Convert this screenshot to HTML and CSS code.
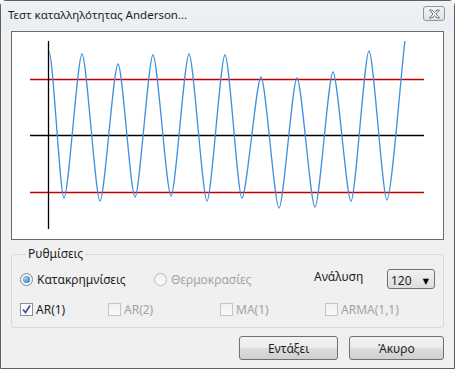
FILE: index.html
```html
<!DOCTYPE html>
<html lang="el">
<head>
    <meta charset="UTF-8">
    <title>Τεστ καταλληλότητας Anderson...</title>
    <link rel="stylesheet" href="styles.css">
</head>
<body>
    <div class="window">
        <div class="titlebar">
            <span class="title">Τεστ καταλληλότητας Anderson...</span>
            <button class="close" type="button" aria-label="Κλείσιμο">
                <svg width="13" height="10" viewBox="0 0 13 10">
                    <path d="M1.5,1 L4,1 L6.5,3.3 L9,1 L11.5,1 L8,5 L11.5,9 L9,9 L6.5,6.7 L4,9 L1.5,9 L5,5 Z" fill="#f4f6f8" stroke="#6d7580" stroke-width="1"/>
                </svg>
            </button>
        </div>

        <div class="content">
            <!-- chart panel -->
            <div class="chart">
                <svg width="431" height="207" viewBox="12 32 431 207">
                    <line x1="30" y1="79.5" x2="424" y2="79.5" stroke="#c00000" stroke-width="1.3"/>
                    <line x1="30" y1="192.5" x2="424" y2="192.5" stroke="#c00000" stroke-width="1.3"/>
                    <line x1="30" y1="135.5" x2="424" y2="135.5" stroke="#000" stroke-width="1.3"/>
                    <line x1="48.5" y1="41" x2="48.5" y2="229" stroke="#000" stroke-width="1.3"/>
                    <path fill="none" stroke="#3f8fdc" stroke-width="1.3"
                        d="M49,52 C53,52 60,198 64,198
                           C68.5,198 77.5,54 82,54
                           C86.5,54 95.5,201 100,201
                           C104.5,201 113.5,64 118,64
                           C122.5,64 130.5,197 135,197
                           C139.5,197 148.5,55 153,55
                           C157.5,55 166.5,196 171,196
                           C175.5,196 184.5,54 189,54
                           C193.5,54 202.5,201 207,201
                           C211.5,201 220.5,55 225,55
                           C229.5,55 237.5,198 242,198
                           C246.5,198 256.5,77 261,77
                           C265.5,77 274.5,208 279,208
                           C283.5,208 292.5,78 297,78
                           C301.5,78 310.5,207 315,207
                           C319.5,207 328.5,72 333,72
                           C337.5,72 346.5,201 351,201
                           C355.5,201 364.5,51 369,51
                           C373.5,51 382.5,200 387,200
                           C391.5,200 402,60 405,41"/>
                </svg>
            </div>

            <fieldset class="settings">
                <legend>Ρυθμίσεις</legend>
                <div class="row radios">
                    <label class="opt w134"><span class="radio checked"></span>Κατακρημνίσεις</label>
                    <label class="opt w160 disabled"><span class="radio"></span>Θερμοκρασίες</label>
                    <span class="res-label">Ανάλυση</span>
                    <div class="combo"><span>120</span><span class="arrow">&#9660;</span></div>
                </div>
                <div class="row checks">
                    <label class="opt w88"><span class="check checked">
                        <svg width="11" height="11" viewBox="0 0 11 11"><path d="M2,5.5 L4.5,8.5 L9,1.5" fill="none" stroke="#3a56a8" stroke-width="1.8"/></svg>
                    </span>AR(1)</label>
                    <label class="opt w112 disabled"><span class="check"></span>AR(2)</label>
                    <label class="opt w105 disabled"><span class="check"></span>MA(1)</label>
                    <label class="opt disabled"><span class="check"></span>ARMA(1,1)</label>
                </div>
            </fieldset>

            <div class="buttons">
                <button class="btn ok" type="button">Εντάξει</button>
                <button class="btn cancel" type="button">Άκυρο</button>
            </div>
        </div>
    </div>
</body>
</html>
```

FILE: styles.css
```css
/* General Reset */
* {
    margin: 0;
    padding: 0;
    box-sizing: border-box;
}

body {
    font-family: 'Noto Sans', 'DejaVu Sans', sans-serif;
    font-size: 12px;
    color: #1e1e1e;
    background: #fff;
}

.window {
    width: 455px;
    height: 369px;
    border: 1px solid #5b6067;
    border-radius: 6px 6px 0 0;
    background: #f0f0f0;
    display: flex;
    flex-direction: column;
}

.titlebar {
    height: 29px;
    display: flex;
    justify-content: space-between;
    align-items: flex-start;
    padding: 5px 9px 0 7px;
    background: linear-gradient(to bottom, #eef2f5, #eaeef2);
}

.title {
    font-size: 11.5px;
    color: #1c1c1c;
    line-height: 18px;
}

.close {
    width: 22px;
    height: 15px;
    border: 1px solid #8e959d;
    border-radius: 3px;
    background: linear-gradient(to bottom, #f3f5f7, #dfe3e7);
    display: flex;
    align-items: center;
    justify-content: center;
}

.content {
    flex: 1;
    padding: 1px 10px 0 10px;
    display: flex;
    flex-direction: column;
}

.chart {
    width: 433px;
    height: 209px;
    border: 1px solid #6a6a6a;
    background: #fff;
}

.chart svg {
    display: block;
}

.settings {
    margin-top: 7px;
    height: 81px;
    border: 1px solid #d5d9dd;
    border-radius: 3px;
    padding: 0 0 0 8px;
}

.settings legend {
    margin-left: 6px;
    padding: 0 2px;
    font-size: 12px;
    line-height: 14px;
    color: #1e1e1e;
}

.row {
    display: flex;
    align-items: center;
}

.radios {
    height: 22px;
    margin-top: 7px;
}

.checks {
    height: 20px;
    margin-top: 9px;
    padding-left: 0;
}

.opt {
    display: flex;
    align-items: center;
    gap: 3px;
    white-space: nowrap;
}

.w134 { width: 134px; }
.w160 { width: 160px; }
.w88 { width: 88px; }
.w112 { width: 112px; }
.w105 { width: 105px; }

.disabled {
    color: #a3a3a3;
}

.radio {
    width: 13px;
    height: 13px;
    border-radius: 50%;
    border: 1px solid #b7bcc2;
    background: linear-gradient(to bottom, #eceef0, #fdfdfd);
    display: flex;
    align-items: center;
    justify-content: center;
    margin-right: 1px;
}

.radio.checked {
    border-color: #7d8791;
}

.radio.checked::after {
    content: "";
    width: 7px;
    height: 7px;
    border-radius: 50%;
    background: radial-gradient(circle at 35% 35%, #9cd6f7, #1c66b5);
}

.check {
    width: 13px;
    height: 13px;
    border: 1px solid #c2c6ca;
    background: linear-gradient(to bottom, #eef0f2, #fafafa);
    display: flex;
    align-items: center;
    justify-content: center;
}

.check.checked {
    border-color: #8e8f8f;
    background: #fff;
}

.res-label {
    width: 73px;
    margin-top: -6px;
}

.combo {
    width: 48px;
    height: 20px;
    border: 1px solid #707070;
    border-radius: 3px;
    background: linear-gradient(to bottom, #f2f2f2, #dcdcdc);
    display: flex;
    align-items: center;
    justify-content: space-between;
    padding: 2px 5px 0 3px;
}

.arrow {
    font-size: 8px;
    color: #000;
}

.buttons {
    display: flex;
    justify-content: flex-end;
    gap: 11px;
    margin-top: 8px;
}

.btn {
    height: 24px;
    border: 1px solid #707070;
    border-radius: 3px;
    background: linear-gradient(to bottom, #f2f2f2 0%, #ebebeb 50%, #dddddd 51%, #cfcfcf 100%);
    font-family: 'Noto Sans', 'DejaVu Sans', sans-serif;
    font-size: 12px;
    color: #1e1e1e;
}

.ok { width: 99px; }
.cancel { width: 95px; }
```
